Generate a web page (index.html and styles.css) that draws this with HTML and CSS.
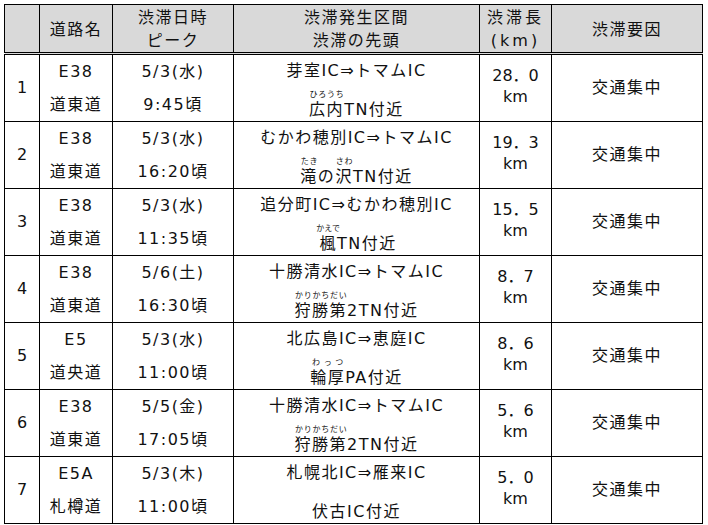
FILE: index.html
```html
<!DOCTYPE html>
<html lang="ja">
<head>
<meta charset="utf-8">
<title>渋滞予測</title>
<link rel="stylesheet" href="styles.css">
</head>
<body>
<table class="jam">
  <colgroup>
    <col class="c-no"><col class="c-road"><col class="c-date"><col class="c-sect"><col class="c-len"><col class="c-cause">
  </colgroup>
  <thead>
    <tr>
      <th></th>
      <th>道路名</th>
      <th>渋滞日時<br>ピーク</th>
      <th>渋滞発生区間<br>渋滞の先頭</th>
      <th class="h-len">渋滞長<br>(km)</th>
      <th>渋滞要因</th>
    </tr>
  </thead>
  <tbody>
    <tr class="first">
      <td class="no">1</td>
      <td class="two"><div>E38</div><div>道東道</div></td>
      <td class="two date"><div>5/3(水)</div><div>9:45頃</div></td>
      <td class="sect"><div class="l1">芽室IC⇒トマムIC</div><div class="l2"><span><ruby>広内<rt>ひろうち</rt></ruby>TN付近</span></div></td>
      <td class="len"><div>28．0</div><div>km</div></td>
      <td class="cause">交通集中</td>
    </tr>
    <tr>
      <td class="no">2</td>
      <td class="two"><div>E38</div><div>道東道</div></td>
      <td class="two date"><div>5/3(水)</div><div>16:20頃</div></td>
      <td class="sect"><div class="l1">むかわ穂別IC⇒トマムIC</div><div class="l2"><span><ruby>滝<rt>たき</rt></ruby>の<ruby>沢<rt>さわ</rt></ruby>TN付近</span></div></td>
      <td class="len"><div>19．3</div><div>km</div></td>
      <td class="cause">交通集中</td>
    </tr>
    <tr>
      <td class="no">3</td>
      <td class="two"><div>E38</div><div>道東道</div></td>
      <td class="two date"><div>5/3(水)</div><div>11:35頃</div></td>
      <td class="sect"><div class="l1">追分町IC⇒むかわ穂別IC</div><div class="l2"><span><ruby>楓<rt>かえで</rt></ruby>TN付近</span></div></td>
      <td class="len"><div>15．5</div><div>km</div></td>
      <td class="cause">交通集中</td>
    </tr>
    <tr>
      <td class="no">4</td>
      <td class="two"><div>E38</div><div>道東道</div></td>
      <td class="two date"><div>5/6(土)</div><div>16:30頃</div></td>
      <td class="sect"><div class="l1">十勝清水IC⇒トマムIC</div><div class="l2"><span><ruby>狩勝第<rt>かりかちだい</rt></ruby>2TN付近</span></div></td>
      <td class="len"><div>8．7</div><div>km</div></td>
      <td class="cause">交通集中</td>
    </tr>
    <tr>
      <td class="no">5</td>
      <td class="two"><div>E5</div><div>道央道</div></td>
      <td class="two date"><div>5/3(水)</div><div>11:00頃</div></td>
      <td class="sect"><div class="l1">北広島IC⇒恵庭IC</div><div class="l2"><span><ruby>輪厚<rt>わっつ</rt></ruby>PA付近</span></div></td>
      <td class="len"><div>8．6</div><div>km</div></td>
      <td class="cause">交通集中</td>
    </tr>
    <tr>
      <td class="no">6</td>
      <td class="two"><div>E38</div><div>道東道</div></td>
      <td class="two date"><div>5/5(金)</div><div>17:05頃</div></td>
      <td class="sect"><div class="l1">十勝清水IC⇒トマムIC</div><div class="l2"><span><ruby>狩勝第<rt>かりかちだい</rt></ruby>2TN付近</span></div></td>
      <td class="len"><div>5．6</div><div>km</div></td>
      <td class="cause">交通集中</td>
    </tr>
    <tr>
      <td class="no">7</td>
      <td class="two"><div>E5A</div><div>札樽道</div></td>
      <td class="two date"><div>5/3(木)</div><div>11:00頃</div></td>
      <td class="sect"><div class="l1">札幌北IC⇒雁来IC</div><div class="l2"><span>伏古IC付近</span></div></td>
      <td class="len"><div>5．0</div><div>km</div></td>
      <td class="cause">交通集中</td>
    </tr>
  </tbody>
</table>
</body>
</html>
```

FILE: styles.css
```css
html, body {
  background: #fff;
}
body {
  margin: 4px;
  font-family: "DejaVu Sans", "Noto Sans CJK JP", sans-serif;
  font-size: 16px;
  color: #111;
}
.jam {
  border-collapse: collapse;
  table-layout: fixed;
  width: 698px;
}
.c-no { width: 35px; }
.c-road { width: 73px; }
.c-date { width: 121px; }
.c-sect { width: 246px; }
.c-len { width: 72px; }
.c-cause { width: 151px; }

.jam th, .jam td {
  border: 1px solid #000;
  padding: 0;
  text-align: center;
  font-weight: normal;
  letter-spacing: 1.5px;
  line-height: 20px;
}
.jam th {
  background: #d9d9d9;
  border-bottom: 3px double #000;
  height: 46px;
  line-height: 23px;
  padding-top: 1px;
  vertical-align: middle;
}
.jam th.h-len {
  letter-spacing: 3px;
}
.jam tbody tr {
  height: 67px;
}
.jam tbody tr.first {
  height: 65px;
}
.jam td {
  vertical-align: top;
}
.jam td.no {
  vertical-align: middle;
  letter-spacing: 0;
}
.two div {
  height: 33px;
  line-height: 34px;
  overflow: hidden;
}
.sect {
  letter-spacing: 0.6px;
}
.sect .l1 {
  height: 32px;
  line-height: 32px;
  overflow: hidden;
}
.sect .l2 {
  height: 32px;
  display: flex;
  flex-direction: column;
  justify-content: flex-end;
  line-height: 16px;
  padding-bottom: 1px;
  box-sizing: border-box;
}
.sect rt {
  font-size: 8px;
  line-height: 1;
  letter-spacing: 0;
  padding-bottom: 1px;
}
.jam td.len {
  vertical-align: middle;
  line-height: 21px;
  letter-spacing: 0;
  padding-bottom: 4px;
}
.len div {
  height: 21px;
}
.jam td.cause {
  vertical-align: middle;
  letter-spacing: 1.5px;
}
```
